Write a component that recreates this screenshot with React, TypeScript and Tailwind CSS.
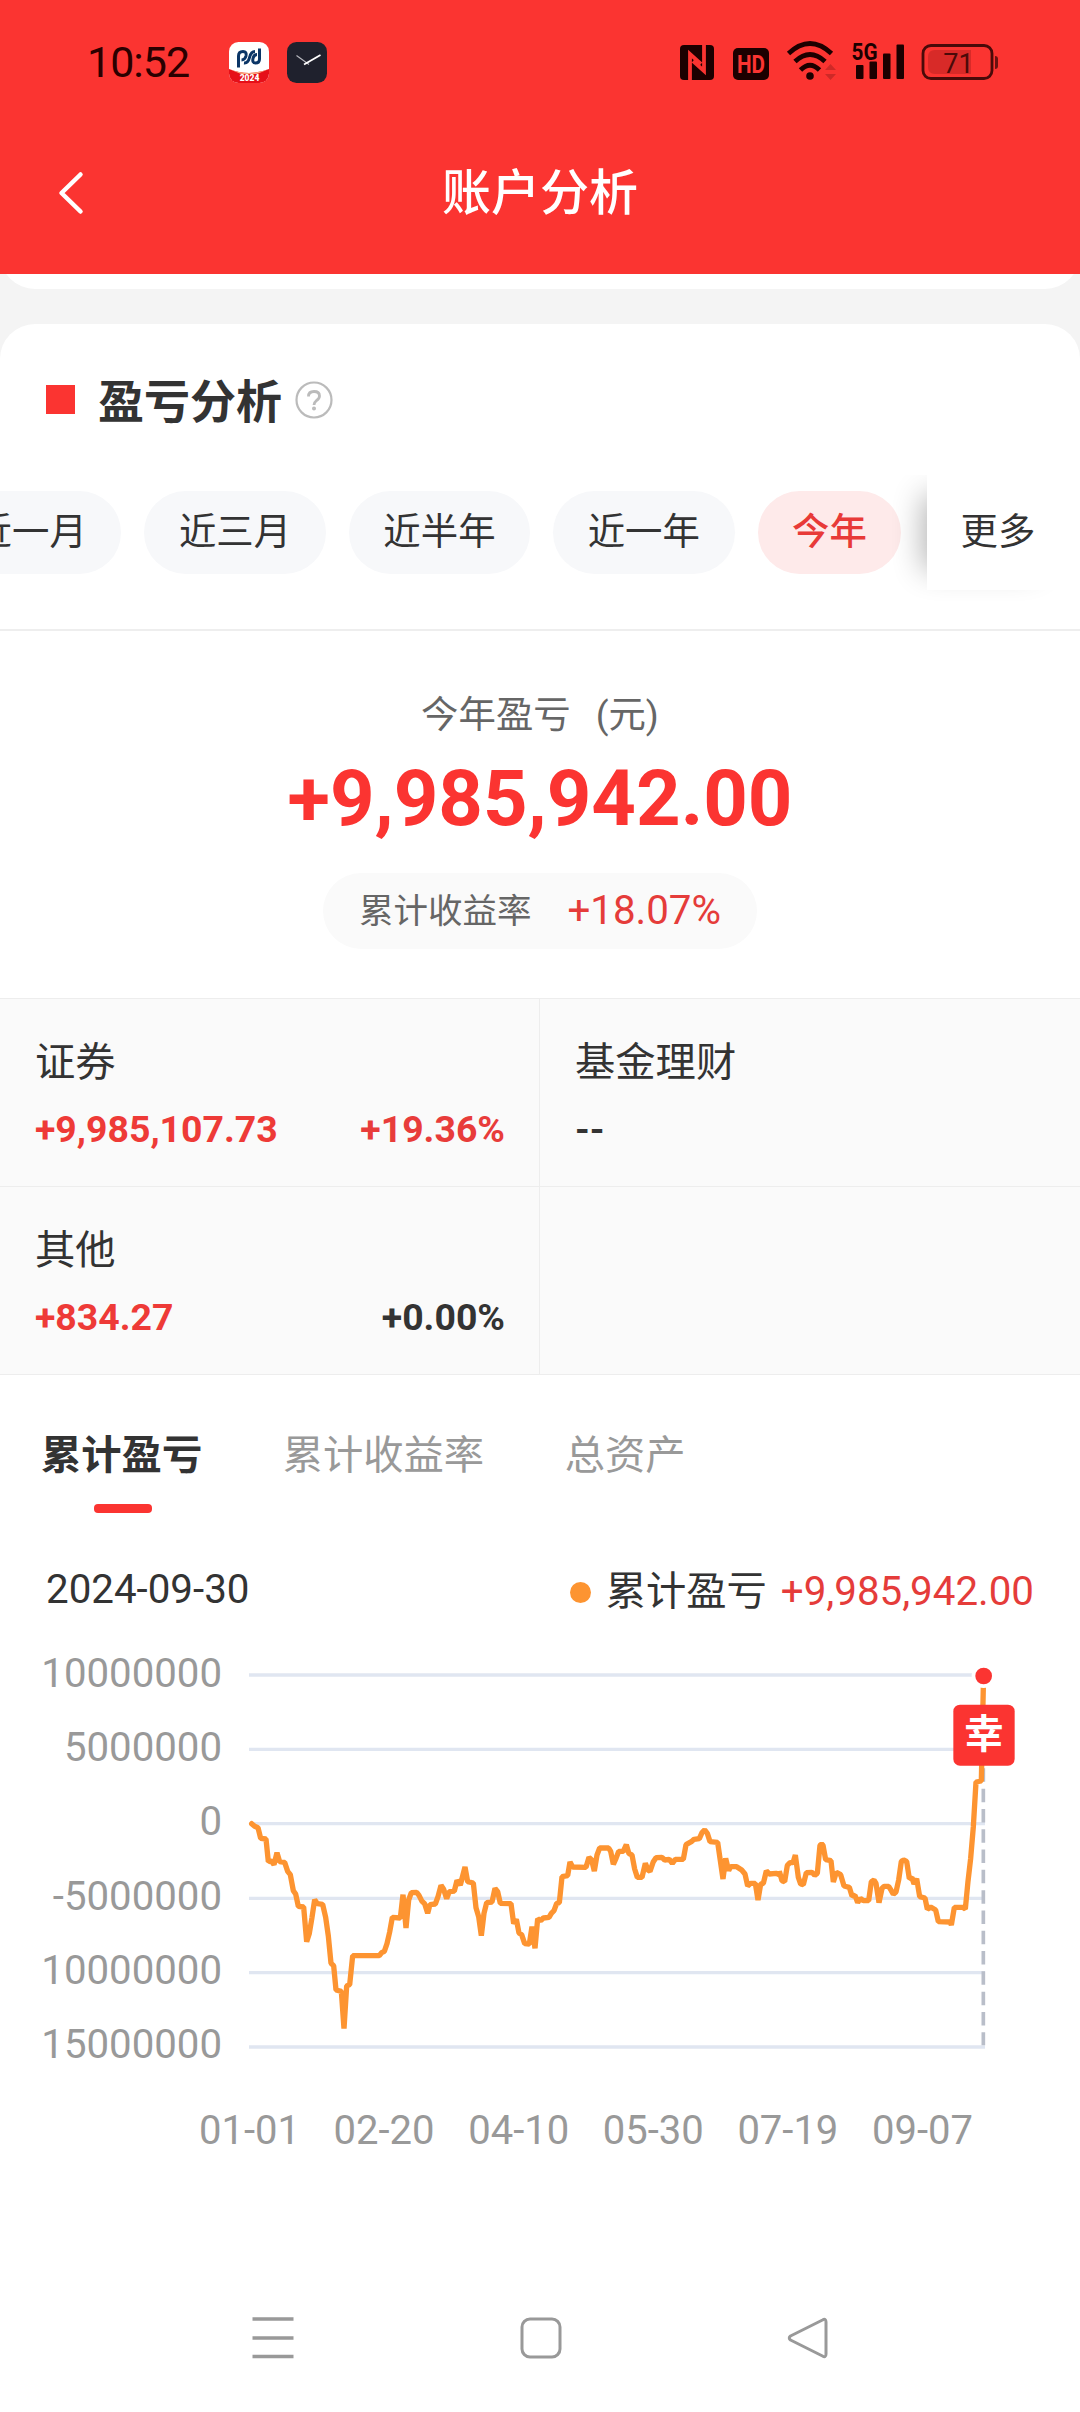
import { clsx } from 'clsx'

const ranges = ['近一月', '近三月', '近半年', '近一年', '今年']

const holdings = [
  { name: '证券', amount: '+9,985,107.73', rate: '+19.36%', up: true, rateUp: true },
  { name: '基金理财', amount: '--', rate: '', up: false, rateUp: false },
  { name: '其他', amount: '+834.27', rate: '+0.00%', up: true, rateUp: false },
  { name: '', amount: '', rate: '', up: false, rateUp: false },
]

const yLabels = ['10000000', '5000000', '0', '-5000000', '10000000', '15000000']
const xLabels = ['01-01', '02-20', '04-10', '05-30', '07-19', '09-07']
const gridLines = [105, 328, 551, 775, 998, 1221]

// chart units are a third of a pixel
const profitLine = [
  '95,551 104,559 114,563 122,595 138,597 145,665 153,662 162,674 171,638 179,665 194,667 203,694 211,704',
  '220,752 227,762 235,799 251,801 260,905 268,880 276,832 284,779 292,791 308,793 317,832 325,888 333,970',
  '341,977 348,1050 364,1054 372,1166 380,1038 389,1034 398,947 478,947 485,938 493,934 501,911 509,876',
  '517,832 541,834 549,764 558,864 566,780 574,758 590,757 597,766 606,784 614,791 623,820 630,794 646,792',
  '654,770 663,736 671,748 680,776 688,755 703,753 711,721 721,735 735,681 743,725 760,729 768,803 776,830',
  '784,887 792,820 800,788 816,786 825,745 833,755 841,790 873,791 881,851 889,838 897,879 905,884 914,911',
  '928,912 936,860 945,925 953,836 962,842 970,834 987,832 994,820 1002,812 1010,790 1018,788 1026,710',
  '1043,707 1050,666 1058,681 1098,682 1107,652 1115,660 1123,693 1131,645 1139,624 1166,624 1172,634 1180,673',
  '1188,655 1196,634 1210,634 1219,614 1227,641 1236,645 1244,687 1252,712 1266,712 1276,670 1284,690',
  '1290,694 1300,665 1308,653 1326,652 1334,660 1348,658 1357,670 1366,658 1390,658 1398,614 1414,605',
  '1422,598 1438,596 1446,578 1454,570 1462,580 1470,605 1493,607 1501,662 1509,717 1517,655 1526,692 1532,680',
  '1550,680 1565,690 1575,702 1583,738 1592,730 1606,730 1614,780 1622,732 1630,730 1639,693 1648,702 1668,700',
  '1678,704 1678,694 1686,722 1694,725 1702,676 1710,668 1719,668 1726,645 1735,712 1742,732 1750,734 1759,698',
  '1776,697 1784,706 1792,700 1800,616 1805,612 1809,616 1817,659 1833,662 1840,726 1849,697 1862,704 1872,738',
  '1888,742 1896,768 1905,766 1913,788 1921,775 1930,782 1946,782 1954,725 1962,720 1968,730 1977,788 1986,745',
  '1992,739 2006,739 2014,752 2020,763 2028,756 2036,720 2044,664 2051,660 2060,664 2068,716 2076,713 2082,732',
  '2090,716 2099,770 2115,774 2122,808 2132,801 2147,810 2155,845 2190,846 2194,855 2203,802 2228,802 2236,807',
  '2244,724 2252,655 2260,560 2268,426 2284,423 2290,140',
].join(' ')

function AppBadges() {
  return (
    <>
      <svg width="40" height="41" viewBox="0 0 40 41" className="ml-[39px]">
        <clipPath id="badge">
          <rect width="40" height="41" rx="9.5" />
        </clipPath>
        <g clipPath="url(#badge)">
          <rect width="40" height="41" fill="#fff" />
          <path d="M0 27Q20 35 40 27V41H0Z" fill="#e60f18" />
          <path d="M0 27Q20 35 40 27L28 32H12Z" fill="#f9a57d" />
          <g fill="none" stroke="#0b3566" strokeWidth="3">
            <path d="M9.500 25.500V14Q9.500 9.500 14 9.500Q18 9.500 17 14Q16 18 12.500 18" />
            <path d="M30.500 6.500V17Q30.500 21 26.500 21Q23 21 24 16.500Q25 12.500 28 12.500" />
            <path d="M15 21Q19 21.500 20.500 15.500T26 9.500" />
          </g>
          <text x="20.5" y="39" textAnchor="middle" fontSize="8.5" fontWeight="900" fill="#fff">
            2024
          </text>
        </g>
      </svg>
      <svg width="40" height="41" viewBox="0 0 40 41" className="ml-[18px]">
        <rect width="40" height="41" rx="9.5" fill="#1f212d" />
        <path d="M9.500 13.500L22 22.500" stroke="#b9bac0" strokeWidth="1.1" />
        <path d="M17 22.500L33.500 13" stroke="#fff" strokeWidth="1.8" />
      </svg>
    </>
  )
}

function StatusIcons() {
  return (
    <svg width="324" height="60" viewBox="678 32 324 60" fill="#1c0000">
      <rect x="680" y="45" width="34" height="35" rx="4" />
      <path d="M690 80V54L701 64M704 45V71L693 61" fill="none" stroke="#fb3431" strokeWidth="3.8" />
      <rect x="733" y="48" width="36" height="32" rx="5" />
      <text x="751" y="73" textAnchor="middle" fontSize="26.5" fontWeight="700" fill="#fb3431" textLength="28" lengthAdjust="spacingAndGlyphs">
        HD
      </text>
      <g fill="none" stroke="#1c0000" strokeWidth="4.8">
        <path d="M788.500 53.500Q810 33.500 831.500 53.500" />
        <path d="M795 61.500Q810 47.500 825 61.500" />
        <path d="M800.500 70Q810 60.500 819.500 70" />
      </g>
      <circle cx="810" cy="76" r="3.8" />
      <path d="M825 70L830.500 64L836 70ZM825 74L830.500 80L836 74Z" opacity="0.2" />
      <text x="864.5" y="60" textAnchor="middle" fontSize="24" fontWeight="700" textLength="26" lengthAdjust="spacingAndGlyphs">
        5G
      </text>
      <rect x="856" y="65" width="7.5" height="14" rx="1" />
      <rect x="869.5" y="61.5" width="7.5" height="17.5" rx="1" />
      <rect x="883" y="53.5" width="7.5" height="25.5" rx="1" />
      <rect x="896.5" y="44.5" width="7.5" height="34.5" rx="1" />
      <rect x="923" y="45.5" width="69" height="33" rx="8" fill="none" stroke="#4a0a09" strokeWidth="2.8" />
      <path d="M935 50H971V74H935Q928 74 928 67V57Q928 50 935 50Z" fill="#d82a28" />
      <path d="M995 56Q998 56 998 59V66Q998 69 995 69Z" fill="#6b1110" />
      <text x="958.5" y="72.5" textAnchor="middle" fontSize="27" fill="#4a0a09">
        71
      </text>
    </svg>
  )
}

function ProfitChart() {
  return (
    <div className="flex h-[440px]">
      <div className="flex w-[222px] flex-col text-right text-[40.2px] leading-[74.2px] text-[#999]">
        {yLabels.map((label, i) => (
          <span key={i} className="-translate-y-[3px]">{label}</span>
        ))}
      </div>
      <svg width="858" height="440" viewBox="6 0 2574 1320">
        <g stroke="#e0e6f1" strokeWidth="10">
          {gridLines.map((y) => (
            <path key={y} d={`M87 ${y}H2295`} />
          ))}
        </g>
        <path d="M2290 385V1216" stroke="#b9bec9" strokeWidth="11" strokeDasharray="40.5 20.4" />
        <polyline
          points={profitLine}
          fill="none"
          stroke="#fd9431"
          strokeWidth="16"
          strokeLinejoin="bevel"
          strokeLinecap="round"
        />
        <circle cx="2291" cy="108" r="36" fill="#fff" />
        <circle cx="2291" cy="108" r="25" fill="#fb3431" />
        <rect x="2200" y="194" width="184" height="183" rx="20" fill="#fb3431" />
        <text x="2292" y="324" textAnchor="middle" fontSize="118" fontWeight="700" fill="#fff">
          幸
        </text>
      </svg>
    </div>
  )
}

export default function App() {
  return (
    <div className="flex h-[2412px] w-[1080px] flex-col overflow-hidden bg-white font-[Roboto,'Noto_Sans_CJK_SC',sans-serif] text-[#333]">
      <header className="h-[274px] bg-[#fb3431]">
        <div className="flex h-[124px] items-center pl-[87px] pr-[78px]">
          <span className="w-[103px] text-[43px] leading-none tracking-[-1px] text-[#2b0000]">10:52</span>
          <AppBadges />
          <div className="ml-auto">
            <StatusIcons />
          </div>
        </div>
        <div className="grid h-[138px] grid-cols-3 items-center px-14">
          <svg width="30" height="44" viewBox="0 0 30 44" fill="none" stroke="#fff" strokeWidth="4.5" strokeLinecap="round" strokeLinejoin="round">
            <path d="M24.500 3.500L5.500 22L24.500 40.500" />
          </svg>
          <h1 className="text-center text-[49px] font-medium leading-none text-white">账户分析</h1>
        </div>
      </header>

      <div className="bg-[#f4f4f4]">
        <div className="flex h-[15px] items-end overflow-hidden">
          <div className="h-20 w-full shrink-0 rounded-b-[35px] bg-white" />
        </div>
        <div className="h-[35px]" />
        <div className="h-[151px] rounded-t-[35px] bg-white">
          <div className="flex h-full items-center pl-[46px]">
            <span className="size-[29px] bg-[#fb3431]" />
            <h2 className="ml-[23px] pt-[4px] text-[46px] font-bold leading-none">盈亏分析</h2>
            <svg width="38" height="38" viewBox="0 0 38 38" fill="none" stroke="#bbb" strokeWidth="2.2" className="ml-[13px] mt-px">
              <circle cx="19" cy="19" r="17.5" />
              <path d="M13.500 15.500Q13.500 10.500 19 10.500T24.500 15Q24.500 17.500 21.500 19.500Q19 21.500 19 24" strokeWidth="2.8" />
              <circle cx="19" cy="27.5" r="0.9" />
            </svg>
          </div>
        </div>
      </div>

      <div className="flex h-[156px] items-start overflow-hidden border-b-2 border-[#eee]">
        <div className="flex h-[115px] w-full items-center gap-[23px]">
          {ranges.map((range, i) => (
            <button
              key={range}
              className={clsx(
                'h-[83px] shrink-0 rounded-full px-[34.6px] text-[37.4px] leading-[83px]',
                i === 0 && '-ml-[60px]',
                range === '今年' ? 'bg-[#feeaea] font-medium text-[#e83a38]' : 'bg-[#f7f8fa]'
              )}
            >
              {range}
            </button>
          ))}
          <div className="ml-[3px] h-full w-[153px] shrink-0 bg-white pl-[33px] text-[37.4px] leading-[115px] shadow-[-24px_0_30px_-20px_rgba(0,0,0,0.3)]">
            更多
          </div>
        </div>
      </div>

      <section className="flex h-[367px] flex-col items-center pt-[64px]">
        <div className="flex gap-[25px] text-[37.4px] leading-[41px] text-[#666]">
          <span>今年盈亏</span>
          <span>(元)</span>
        </div>
        <div className="mt-[23px] text-[77.8px] font-bold leading-[80px] text-[#fb3431]">+9,985,942.00</div>
        <div className="mt-[34px] flex h-[76px] w-[434px] items-center justify-between rounded-full bg-[#fafafa] px-9">
          <span className="text-[34.5px] leading-[74px] text-[#666]">累计收益率</span>
          <span className="text-[40.3px] leading-[76px] text-[#e53c3a]">+18.07%</span>
        </div>
      </section>

      <section className="grid grid-cols-2 border-t border-[#ededed] bg-[#fafafa]">
        {holdings.map((item, i) => (
          <div key={i} className={clsx('h-[188px] border-b border-[#ededed] pl-[35px] pr-[34px] pt-[43px]', i % 2 === 0 && 'border-r')}>
            <div className="h-[42px] text-[40.3px] leading-[42px]">{item.name}</div>
            <div className="mt-[24px] flex justify-between text-[37.4px] font-bold leading-[42px]">
              <span className={clsx(item.up && 'text-[#ee3a37]')}>{item.amount}</span>
              <span className={clsx(item.rateUp && 'text-[#e83c3a]')}>{item.rate}</span>
            </div>
          </div>
        ))}
      </section>

      <nav className="flex h-[138px] gap-[80.5px] pl-[41px] pt-[60px] text-[40.3px] leading-[42px] text-[#999]">
        <div className="flex flex-col items-center">
          <span className="font-bold text-[#333]">累计盈亏</span>
          <span className="ml-[3px] mt-[27px] h-[9px] w-[58px] rounded bg-[#fb3431]" />
        </div>
        <span>累计收益率</span>
        <span>总资产</span>
      </nav>

      <div className="flex h-[127px] items-start pl-[46px] pr-[46px] pt-[56px] text-[40.3px] leading-[42px]">
        <span>2024-09-30</span>
        <div className="ml-auto flex items-center pt-[2px]">
          <span className="size-[21px] rounded-full bg-[#fd9431]" />
          <span className="ml-[15px]">累计盈亏</span>
          <span className="ml-[14px] text-[#e53c3a]">+9,985,942.00</span>
        </div>
      </div>

      <ProfitChart />

      <div className="flex w-[973px] justify-between pl-[199px] text-[40px] leading-[102px] text-[#999]">
        {xLabels.map((label) => (
          <span key={label}>{label}</span>
        ))}
      </div>

      <footer className="mt-auto flex h-[149px] items-center justify-between pl-[252px] pr-[251px]">
        <svg width="42" height="42" viewBox="0 0 42 42" stroke="#999" strokeWidth="3.5">
          <path d="M0.500 2H41.500M0.500 21H41.500M0.500 39.500H41.500" />
        </svg>
        <svg width="42" height="42" viewBox="0 0 42 42" fill="none" stroke="#999" strokeWidth="3" className="ml-px">
          <rect x="2" y="2" width="38" height="38" rx="8" />
        </svg>
        <svg width="42" height="42" viewBox="0 0 42 42" fill="none" stroke="#999" strokeWidth="3" strokeLinejoin="round">
          <path d="M35.500 3Q39 1 39 5V37Q39 41 35.500 39L3.500 23Q1 21 3.500 19Z" />
        </svg>
      </footer>
    </div>
  )
}
